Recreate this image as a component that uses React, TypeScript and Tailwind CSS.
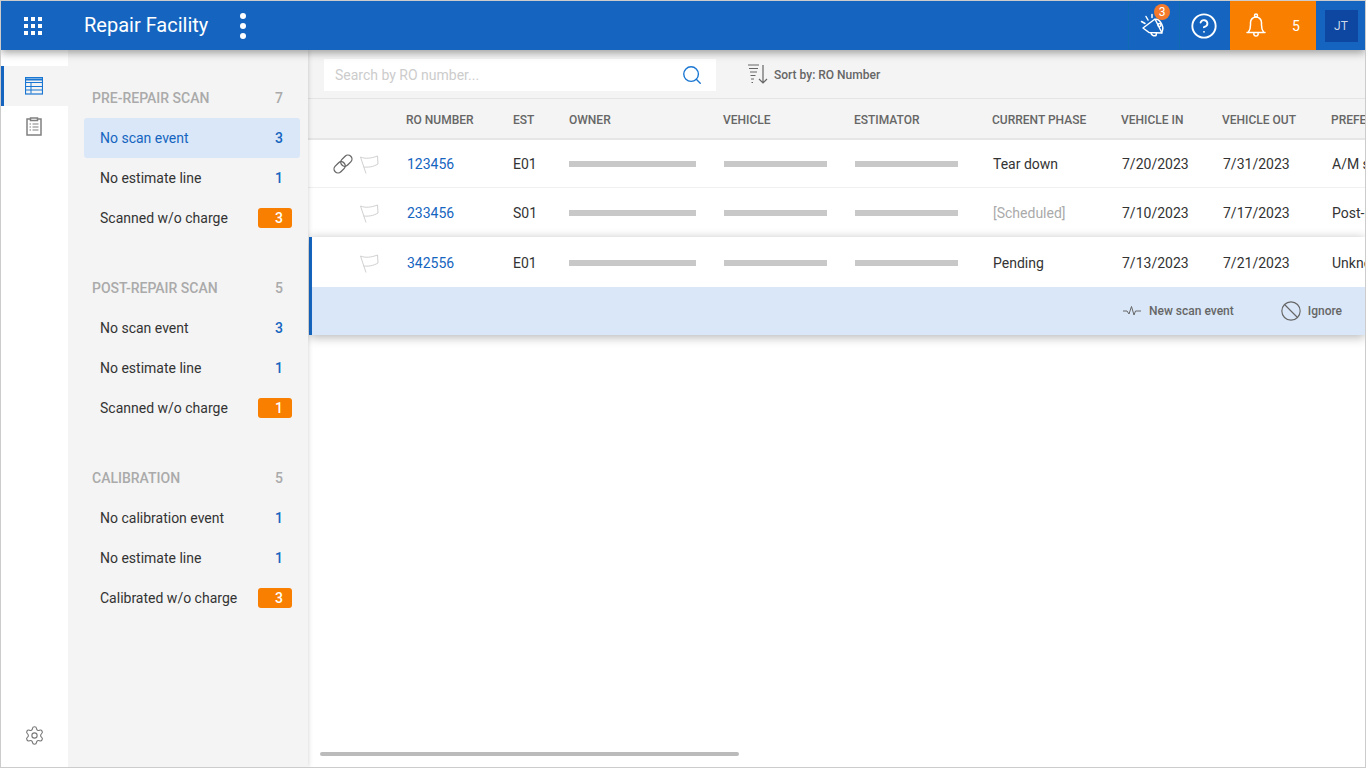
import { Ban, CircleHelp, Search, Settings } from 'lucide-react';

const sections = [
  {
    title: 'PRE-REPAIR SCAN',
    total: 7,
    items: [
      { label: 'No scan event', count: 3, active: true },
      { label: 'No estimate line', count: 1 },
      { label: 'Scanned w/o charge', count: 3, warn: true },
    ],
  },
  {
    title: 'POST-REPAIR SCAN',
    total: 5,
    items: [
      { label: 'No scan event', count: 3 },
      { label: 'No estimate line', count: 1 },
      { label: 'Scanned w/o charge', count: 1, warn: true },
    ],
  },
  {
    title: 'CALIBRATION',
    total: 5,
    items: [
      { label: 'No calibration event', count: 1 },
      { label: 'No estimate line', count: 1 },
      { label: 'Calibrated w/o charge', count: 3, warn: true },
    ],
  },
];

const rows = [
  { ro: '123456', est: 'E01', phase: 'Tear down', vin: '7/20/2023', vout: '7/31/2023', pref: 'A/M shop', link: true },
  { ro: '233456', est: 'S01', phase: '[Scheduled]', vin: '7/10/2023', vout: '7/17/2023', pref: 'Post-repair', muted: true },
  { ro: '342556', est: 'E01', phase: 'Pending', vin: '7/13/2023', vout: '7/21/2023', pref: 'Unknown' },
];

function FlagIcon() {
  return (
    <svg width="20" height="20" viewBox="0 0 20 20" fill="none" stroke="#d0d0d0" strokeWidth="1">
      <path d="M1.500 3 7 19.500" />
      <path d="M1.500 3C6 5 12 4.500 18.500 2L19 10C14 13 9 13.500 4.500 13" />
    </svg>
  );
}

function LinkIcon() {
  return (
    <svg width="20" height="20" viewBox="0 0 20 20" fill="none" stroke="#666" strokeWidth="1.300">
      <g transform="rotate(-45 10 10)">
        <rect x="-1" y="6" width="12.500" height="8" rx="4" />
        <rect x="8.500" y="6" width="12.500" height="8" rx="4" />
      </g>
    </svg>
  );
}

function Row({ row }: { row: (typeof rows)[number] }) {
  return (
    <div className="flex items-center h-full text-sm text-[#333]">
      <div className="w-[98px] shrink-0 flex items-center justify-end gap-[6px] pr-[27px]">
        {row.link && <LinkIcon />}
        <FlagIcon />
      </div>
      <div className="w-[107px] shrink-0 pl-[1px] text-[#1565c0]">{row.ro}</div>
      <div className="w-[56px] shrink-0">{row.est}</div>
      <div className="w-[155px] shrink-0"><div className="h-[6px] w-[127px] bg-[#c8c8c8]" /></div>
      <div className="w-[131px] shrink-0"><div className="h-[6px] w-[103px] bg-[#c8c8c8]" /></div>
      <div className="w-[138px] shrink-0"><div className="h-[6px] w-[103px] bg-[#c8c8c8]" /></div>
      <div className={`w-[129px] shrink-0 ${row.muted ? 'text-[#aaa]' : ''}`}>{row.phase}</div>
      <div className="w-[101px] shrink-0">{row.vin}</div>
      <div className="w-[108px] shrink-0">{row.vout}</div>
      <div className="shrink-0 pl-[1px] whitespace-nowrap">{row.pref}</div>
    </div>
  );
}

export default function App() {
  return (
    <div className="h-screen w-screen overflow-hidden border border-[#ccc] bg-white flex flex-col font-['Roboto',sans-serif]">
      {/* Header */}
      <header className="relative z-30 h-[49px] shrink-0 bg-[#1565c0] text-white flex items-center shadow-[0_3px_8px_rgba(0,0,0,0.35)]">
        <div className="w-[67px] flex justify-center pr-[3px]">
          <svg width="18" height="18" viewBox="0 0 18 18" fill="white">
            <rect x="0" y="0" width="4" height="4" /><rect x="7" y="0" width="4" height="4" /><rect x="14" y="0" width="4" height="4" />
            <rect x="0" y="7" width="4" height="4" /><rect x="7" y="7" width="4" height="4" /><rect x="14" y="7" width="4" height="4" />
            <rect x="0" y="14" width="4" height="4" /><rect x="7" y="14" width="4" height="4" /><rect x="14" y="14" width="4" height="4" />
          </svg>
        </div>
        <div className="ml-[16px] mb-[2px] text-xl leading-none">Repair Facility</div>
        <div className="ml-[32px] flex flex-col gap-[4px]">
          <span className="w-[6px] h-[6px] rounded-full bg-white" />
          <span className="w-[6px] h-[6px] rounded-full bg-white" />
          <span className="w-[6px] h-[6px] rounded-full bg-white" />
        </div>
        <div className="ml-auto flex h-full items-center">
          <div className="relative w-[51px] h-full flex items-center justify-center border-l border-[#0f6cb0]">
            <svg width="28" height="28" viewBox="0 0 28 28" fill="none" stroke="white" strokeWidth="1.500" strokeLinejoin="round" strokeLinecap="round" className="mt-[2px]">
              <path d="M3 15 15 6 22 20 9 19.500Z" />
              <path d="M16 6.500c2.500-1 5.500 3.500 6.500 6.500 1 2.500-.5 6-1 6.500" />
              <circle cx="19.500" cy="12" r="1.500" />
              <path d="M11 20c.5 2 2.500 3.500 5 2.500l.5-2.500" />
              <path d="M1.500 8.500l3.500 2M6 3.500l2 3.500M12 1.500v3" />
            </svg>
            <span className="absolute left-[25px] top-[3px] w-4 h-4 rounded-full bg-[#f4792b] text-xs leading-4 text-center">3</span>
          </div>
          <div className="w-[51px] h-full flex items-center justify-center border-l border-[#0f6cb0] pr-[2px]">
            <CircleHelp size={28} strokeWidth={1.6} />
          </div>
          <div className="w-[86px] h-full bg-[#f97f00] flex items-center">
            <svg width="20" height="25" viewBox="0 0 20 25" fill="none" stroke="white" strokeWidth="1.500" strokeLinejoin="round" strokeLinecap="round" className="ml-[16px]">
              <circle cx="10" cy="2.500" r="1.500" />
              <path d="M2.500 19c1.500-2 2-4 2-7V9.500a5.500 5.500 0 0 1 11 0V12c0 3 .5 5 2 7" />
              <path d="M1 19.500h18" />
              <path d="M8 20a2.200 2.200 0 1 0 4 0" />
            </svg>
            <span className="ml-[26px] text-sm">5</span>
          </div>
          <div className="w-[49px] flex justify-center pl-[1px]">
            <div className="w-[33px] h-[32px] bg-[#0d47a1] text-[#cfd8e8] text-xs flex items-center justify-center">JT</div>
          </div>
        </div>
      </header>

      <div className="flex-1 flex min-h-0">
        {/* Rail */}
        <aside className="relative z-20 w-[67px] shrink-0 bg-white flex flex-col pt-[16px]">
          <div className="h-[40px] bg-[#f4f4f4] border-l-[3px] border-[#1565c0] flex items-center justify-center pr-[5px]">
            <svg width="18" height="18" viewBox="0 0 18 18" fill="none" stroke="#1976d2" strokeWidth="1">
              <rect x="0.500" y="0.500" width="17" height="16.500" strokeWidth="1.200" />
              <path d="M0.500 2.500h17" strokeWidth="2" />
              <path d="M1 5.500h16M6 5.500v11M1 9.500h16M1 13h16" />
            </svg>
          </div>
          <div className="h-[40px] flex items-center justify-center pr-[1px]">
            <svg width="16" height="20" viewBox="0 0 16 20" fill="none" stroke="#808080" strokeWidth="1.500" className="mb-[1px]">
              <path d="M4.500 3H1v16h14V3h-3.500" />
              <path d="M4.500 2h7v2.500h-7z" />
              <path d="M3.500 8h1.500M6.500 8h6M3.500 11h1.500M6.500 11h6M3.500 14h1.500M6.500 14h6" strokeWidth="1.200" />
            </svg>
          </div>
          <div className="mt-auto h-[64px] flex items-center justify-center pr-[1px]">
            <Settings size={21} strokeWidth={1.25} className="text-[#777]" />
          </div>
        </aside>

        {/* Queue panel */}
        <aside className="relative z-10 w-[240px] shrink-0 bg-[#f4f4f4] pt-[28px] pl-[16px] pr-[8px] shadow-[0_0_5px_rgba(0,0,0,0.2)]">
          <div className="flex flex-col gap-[30px]">
            {sections.map((s) => (
              <section key={s.title}>
                <div className="h-[40px] flex items-center justify-between pl-[8px] pr-[17px] text-sm font-medium text-[#aaa]">
                  <span>{s.title}</span>
                  <span>{s.total}</span>
                </div>
                {s.items.map((it) => (
                  <div
                    key={it.label}
                    className={`h-[40px] flex items-center justify-between pl-[16px] rounded-[3px] text-sm ${
                      it.active ? 'bg-[#d9e7f8] text-[#1565c0]' : 'text-[#333]'
                    }`}
                  >
                    <span>{it.label}</span>
                    {it.warn ? (
                      <span className="w-[34px] h-[20px] mr-[8px] rounded-[3px] bg-[#f97f00] text-white text-sm font-medium flex items-center justify-end pr-[9px]">
                        {it.count}
                      </span>
                    ) : (
                      <span className="mr-[17px] text-sm font-medium text-[#1565c0]">{it.count}</span>
                    )}
                  </div>
                ))}
              </section>
            ))}
          </div>
        </aside>

        {/* Main */}
        <main className="relative flex-1 min-w-0 overflow-hidden bg-white">
          <div className="h-[49px] bg-[#f4f4f4] flex items-center pl-[16px] pt-[2px] border-b border-[#e4e4e4]">
            <div className="w-[392px] h-[32px] bg-white flex items-center justify-between pl-[11px] pr-[13px]">
              <span className="text-sm text-[#ccc]">Search by RO number...</span>
              <Search size={22} strokeWidth={1.5} className="text-[#1976d2]" />
            </div>
            <svg width="22" height="22" viewBox="0 0 22 22" fill="none" stroke="#666" strokeWidth="1.200" className="ml-[31px] mb-[2px]">
              <path d="M1 2h11M2 5.500h9M3 9h7M3.500 12.500h5M4 16h3M4.500 19.500h1.500" />
              <path d="M16 2v18M12 16l4 4 4-4" />
            </svg>
            <span className="ml-[5px] text-xs font-medium text-[#666]">Sort by: RO Number</span>
          </div>

          <div className="h-[41px] bg-[#f4f4f4] border-b-2 border-[#e6e6e6] pt-[2px] flex items-center text-xs font-medium text-[#666] whitespace-nowrap">
            <div className="w-[98px] shrink-0" />
            <div className="w-[107px] shrink-0">RO NUMBER</div>
            <div className="w-[56px] shrink-0">EST</div>
            <div className="w-[154px] shrink-0">OWNER</div>
            <div className="w-[131px] shrink-0">VEHICLE</div>
            <div className="w-[138px] shrink-0">ESTIMATOR</div>
            <div className="w-[129px] shrink-0">CURRENT PHASE</div>
            <div className="w-[101px] shrink-0">VEHICLE IN</div>
            <div className="w-[109px] shrink-0">VEHICLE OUT</div>
            <div className="shrink-0">PREFERRED</div>
          </div>

          <div className="h-[48px] border-b border-[#f0f0f0]"><Row row={rows[0]} /></div>
          <div className="h-[49px]"><Row row={rows[1]} /></div>

          <div className="relative ml-[1px] border-l-[3px] border-[#1565c0] shadow-[0_2px_10px_rgba(0,0,0,0.3)]">
            <div className="h-[50px] -ml-[4px] pt-[1px]"><Row row={rows[2]} /></div>
            <div className="h-[48px] bg-[#d9e7f8] pb-[1px] flex items-center justify-end text-xs font-medium text-[#666]">
              <svg width="20" height="12" viewBox="0 0 20 12" fill="none" stroke="#666" strokeWidth="1">
                <path d="M1 6h4l2 3 2.500-7.500L12 10l1.500-4H19" />
              </svg>
              <span className="ml-[7px]">New scan event</span>
              <Ban size={22} strokeWidth={1.25} className="ml-[46px]" />
              <span className="ml-[6px] mr-[23px]">Ignore</span>
            </div>
          </div>

          <div className="absolute left-[12px] bottom-[11px] h-[4px] w-[419px] rounded-full bg-[#bbb]" />
        </main>
      </div>
    </div>
  );
}
